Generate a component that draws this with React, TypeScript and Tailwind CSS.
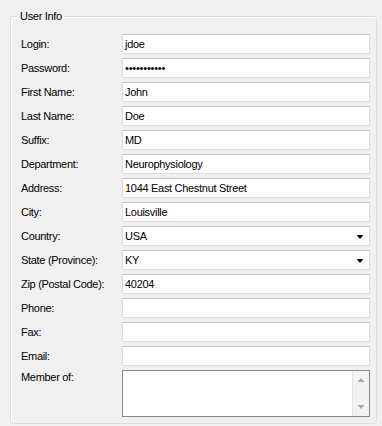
import React from "react";

const rows: { label: string; value?: string; kind?: "text" | "password" | "combo" }[] = [
  { label: "Login:", value: "jdoe" },
  { label: "Password:", value: "•••••••••••", kind: "password" },
  { label: "First Name:", value: "John" },
  { label: "Last Name:", value: "Doe" },
  { label: "Suffix:", value: "MD" },
  { label: "Department:", value: "Neurophysiology" },
  { label: "Address:", value: "1044 East Chestnut Street" },
  { label: "City:", value: "Louisville" },
  { label: "Country:", value: "USA", kind: "combo" },
  { label: "State (Province):", value: "KY", kind: "combo" },
  { label: "Zip (Postal Code):", value: "40204" },
  { label: "Phone:", value: "" },
  { label: "Fax:", value: "" },
  { label: "Email:", value: "" },
];

function Field({ value, kind }: { value?: string; kind?: string }) {
  return (
    <div className="relative h-[20px] bg-white border border-[#dcdcdc] border-t-[#c4c4c4] flex items-center pl-[2px] text-black">
      <span className={kind === "password" ? "text-[11px] tracking-[-0.2px] leading-none" : ""}>{value}</span>
      {kind === "combo" && (
        <svg className="absolute right-[5px] top-[8px]" width="8" height="4" viewBox="0 0 8 4">
          <path d="M0.5 0 L7.5 0 L4 4 Z" fill="#000" />
        </svg>
      )}
    </div>
  );
}

export default function App() {
  return (
    <div
      className="w-[382px] h-[426px] bg-[#f0f0f0] pt-[16px] pl-[10px] text-[11px] tracking-[-0.3px] text-black"
      style={{ fontFamily: '"Liberation Sans", Arial, sans-serif' }}
    >
      <div className="relative w-[367px] h-[408px] border border-[#d5dfe5] rounded-[3px] shadow-[inset_1px_1px_0_#ffffff] pt-[17px] pl-[10px]">
        <span className="absolute top-[-8px] left-[7px] bg-[#f0f0f0] px-[2px] leading-[14px]">User Info</span>
        <div className="grid grid-cols-[101px_248px] gap-y-[4px] items-center">
          {rows.map((r) => (
            <React.Fragment key={r.label}>
              <div className="leading-[20px] h-[20px]">{r.label}</div>
              <Field value={r.value} kind={r.kind} />
            </React.Fragment>
          ))}
          <div className="self-start leading-[14px] pt-[0px] h-[47px]">Member of:</div>
          <div className="h-[47px] bg-white border border-[#828790] flex justify-end">
            <div className="w-[17px] h-full bg-[#f3f3f3] border-l border-[#e6e6e6] flex flex-col justify-between items-center py-[7px]">
              <svg width="8" height="4" viewBox="0 0 8 4">
                <path d="M0.5 4 L7.5 4 L4 0 Z" fill="#a8a8a8" />
              </svg>
              <svg width="8" height="4" viewBox="0 0 8 4">
                <path d="M0.5 0 L7.5 0 L4 4 Z" fill="#a8a8a8" />
              </svg>
            </div>
          </div>
        </div>
      </div>
    </div>
  );
}
